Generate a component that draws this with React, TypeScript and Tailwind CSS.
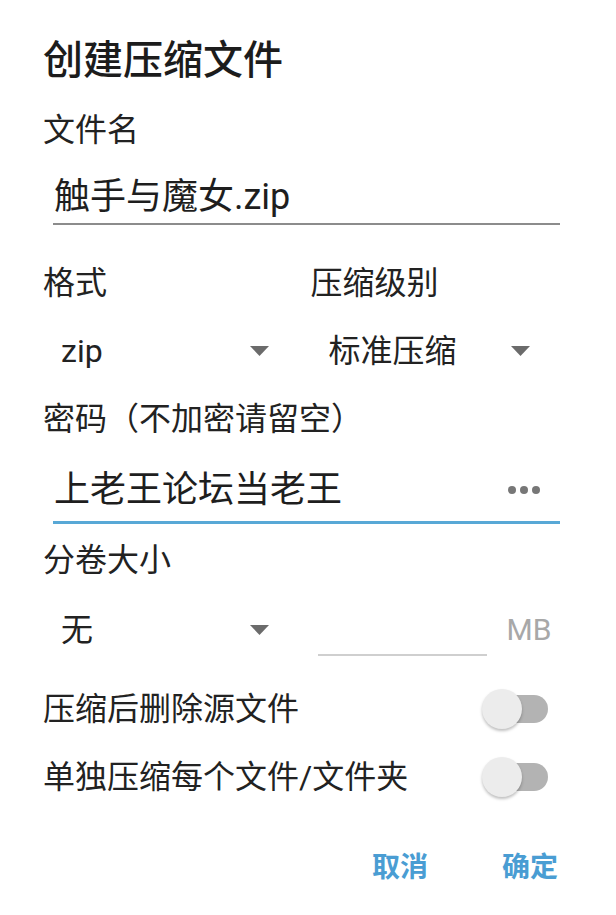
import type { ReactNode } from "react"

const fontStack = {
  fontFamily: 'Roboto, "Noto Sans CJK SC", sans-serif',
}

const Caret = () => (
  <svg width="19" height="10" viewBox="0 0 19 10" className="shrink-0">
    <polygon points="0,0 19,0 9.5,10" fill="#6b6b6b" />
  </svg>
)

const Spinner = ({ value, padRight }: { value: string; padRight: string }) => (
  <div className={`flex h-[50px] items-center justify-between pl-[18px] ${padRight}`}>
    <span className="text-[32px] leading-none text-[#222]">{value}</span>
    <Caret />
  </div>
)

const Label = ({ children, className = "" }: { children: ReactNode; className?: string }) => (
  <div className={`flex h-[40px] items-center text-[32px] leading-none text-[#222] ${className}`}>
    {children}
  </div>
)

const Toggle = () => (
  <div className="relative mr-[12px] h-[40px] w-[66px] shrink-0">
    <div className="absolute left-[10px] right-0 top-[6px] h-[28px] rounded-full bg-[#b3b3b3]" />
    <div className="absolute left-0 top-0 h-[40px] w-[40px] rounded-full bg-[#ececec] shadow-[0_2px_3px_rgba(0,0,0,0.25)]" />
  </div>
)

const SwitchRow = ({ text }: { text: string }) => (
  <div className="flex h-[68px] items-center justify-between">
    <span className="text-[32px] leading-none text-[#222]">{text}</span>
    <Toggle />
  </div>
)

export default function App() {
  return (
    <div className="min-h-screen w-[616px] bg-white" style={fontStack}>
      <div className="pl-[43px] pr-[56px]">
        <div className="box-content flex h-[60px] items-center pt-[31px] text-[40px] font-medium leading-none text-[#1c1c1c]">
          创建压缩文件
        </div>

        <Label className="mt-[19px]">文件名</Label>

        <div className="ml-[10px] mt-[21px] flex h-[54px] items-center border-b-2 border-[#8c8c8c] pl-[1px] text-[36px] leading-none text-[#1e1e1e]">
          触手与魔女.zip
        </div>

        <div className="mt-[38px] grid grid-cols-2 gap-x-[18px]">
          <Label>格式</Label>
          <Label>压缩级别</Label>
        </div>

        <div className="mt-[23px] grid grid-cols-2 gap-x-[18px]">
          <Spinner value="zip" padRight="pr-[24px]" />
          <Spinner value="标准压缩" padRight="pr-[30px]" />
        </div>

        <Label className="mt-[23px]">密码（不加密请留空）</Label>

        <div className="ml-[10px] mt-[19px] flex h-[66px] items-center justify-between border-b-[3px] border-[#58a8d6] pl-[1px] pr-[20px]">
          <span className="text-[36px] leading-none text-[#1e1e1e]">上老王论坛当老王</span>
          <div className="flex items-center gap-[4px]">
            <span className="h-[8px] w-[8px] rounded-full bg-[#777]" />
            <span className="h-[8px] w-[8px] rounded-full bg-[#777]" />
            <span className="h-[8px] w-[8px] rounded-full bg-[#777]" />
          </div>
        </div>

        <Label className="mt-[16px]">分卷大小</Label>

        <div className="mt-[24px] grid grid-cols-2 gap-x-[18px]">
          <div className="flex h-[52px] items-center justify-between pl-[18px] pr-[24px]">
            <span className="text-[32px] leading-none text-[#222]">无</span>
            <Caret />
          </div>
          <div className="flex h-[52px] items-center">
            <div className="ml-[7px] h-[52px] w-[169px] shrink-0 border-b-2 border-[#cfcfcf]" />
            <span className="ml-[20px] text-[30px] leading-none text-[#a8a8a8]">MB</span>
          </div>
        </div>

        <div className="mt-[19px]">
          <SwitchRow text="压缩后删除源文件" />
          <SwitchRow text="单独压缩每个文件/文件夹" />
        </div>

        <div className="mt-[33px] flex h-[48px] items-center justify-end gap-[74px] pr-[2px] text-[28px] font-bold leading-none text-[#4a9dd3]">
          <span>取消</span>
          <span>确定</span>
        </div>
      </div>
    </div>
  )
}
